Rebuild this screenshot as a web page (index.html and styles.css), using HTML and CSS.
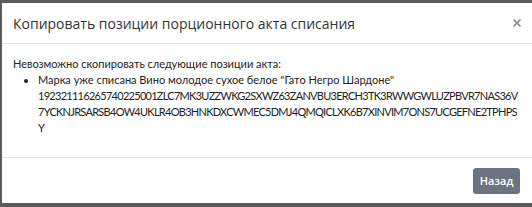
FILE: index.html
```html
<!DOCTYPE html>
<html lang="ru">
<head>
<meta charset="utf-8">
<link rel="stylesheet" href="styles.css">
</head>
<body>
<div class="backdrop">
  <div class="modal">
    <div class="modal-header">
      <h5 class="modal-title">Копировать позиции порционного акта списания</h5>
      <button class="close" type="button" aria-label="Close">
        <svg width="8" height="8" viewBox="0 0 8 8"><path d="M0.6 0.6 L7.4 7.4 M7.4 0.6 L0.6 7.4" stroke="#8a8a8a" stroke-width="1.5" fill="none"/></svg>
      </button>
    </div>
    <div class="modal-body">
      <p class="lead">Невозможно скопировать следующие позиции акта:</p>
      <ul class="list">
        <li>Марка уже списана Вино молодое сухое белое "Гато Негро Шардоне"<br><span class="code">192321116265740225001ZLC7MK3UZZWKG2SXWZ63ZANVBU3ERCH3TK3RWWGWLUZPBVR7NAS36V<br>7YCKNJRSARSB4OW4UKLR4OB3HNKDXCWMEC5DMJ4QMQICLXK6B7XINVIM7ONS7UCGEFNE2TPHPS<br>Y</span></li>
      </ul>
    </div>
    <div class="modal-footer">
      <button class="btn" type="button">Назад</button>
    </div>
  </div>
</div>
</body>
</html>
```
FILE: styles.css
```css
html, body {
  margin: 0;
  padding: 0;
  height: 100%;
}
body {
  background: #5b5b5b;
  overflow: hidden;
}
.backdrop {
  padding: 3px 0 0 2px;
}
.modal {
  background: #fff;
  width: 530px;
  height: 200px;
  display: flex;
  flex-direction: column;
  font-family: "Open Sans", sans-serif;
  color: #212529;
}
.modal-header {
  height: 41px;
  box-sizing: border-box;
  border-bottom: 1px solid #e6e6e6;
  display: flex;
  align-items: center;
  padding: 0 11px 0 11px;
}
.modal-title {
  margin: 0;
  font-size: 14px;
  font-weight: 400;
  color: #333;
}
.close {
  margin-left: auto;
  background: none;
  border: 0;
  padding: 0;
  width: 8px;
  height: 8px;
  display: flex;
}
.modal-body {
  flex: 1;
  padding: 12px 0 0 11px;
  font-family: "Lato", "Noto Sans", sans-serif;
  font-size: 11px;
  color: #222;
  line-height: 16px;
}
.lead {
  margin: 0;
}
.list {
  margin: 0;
  padding: 0 0 0 25px;
}
.code {
  letter-spacing: -0.72px;
}
.modal-footer {
  border-top: 1px solid #e6e6e6;
  height: 46px;
  box-sizing: border-box;
  display: flex;
  align-items: center;
  padding-left: 471px;
}
.btn {
  background: #6c757d;
  color: #fff;
  border: 0;
  border-radius: 3px;
  height: 26px;
  width: 47px;
  padding: 0;
  font-family: "Open Sans", sans-serif;
  font-size: 11px;
  font-weight: 600;
}
```
